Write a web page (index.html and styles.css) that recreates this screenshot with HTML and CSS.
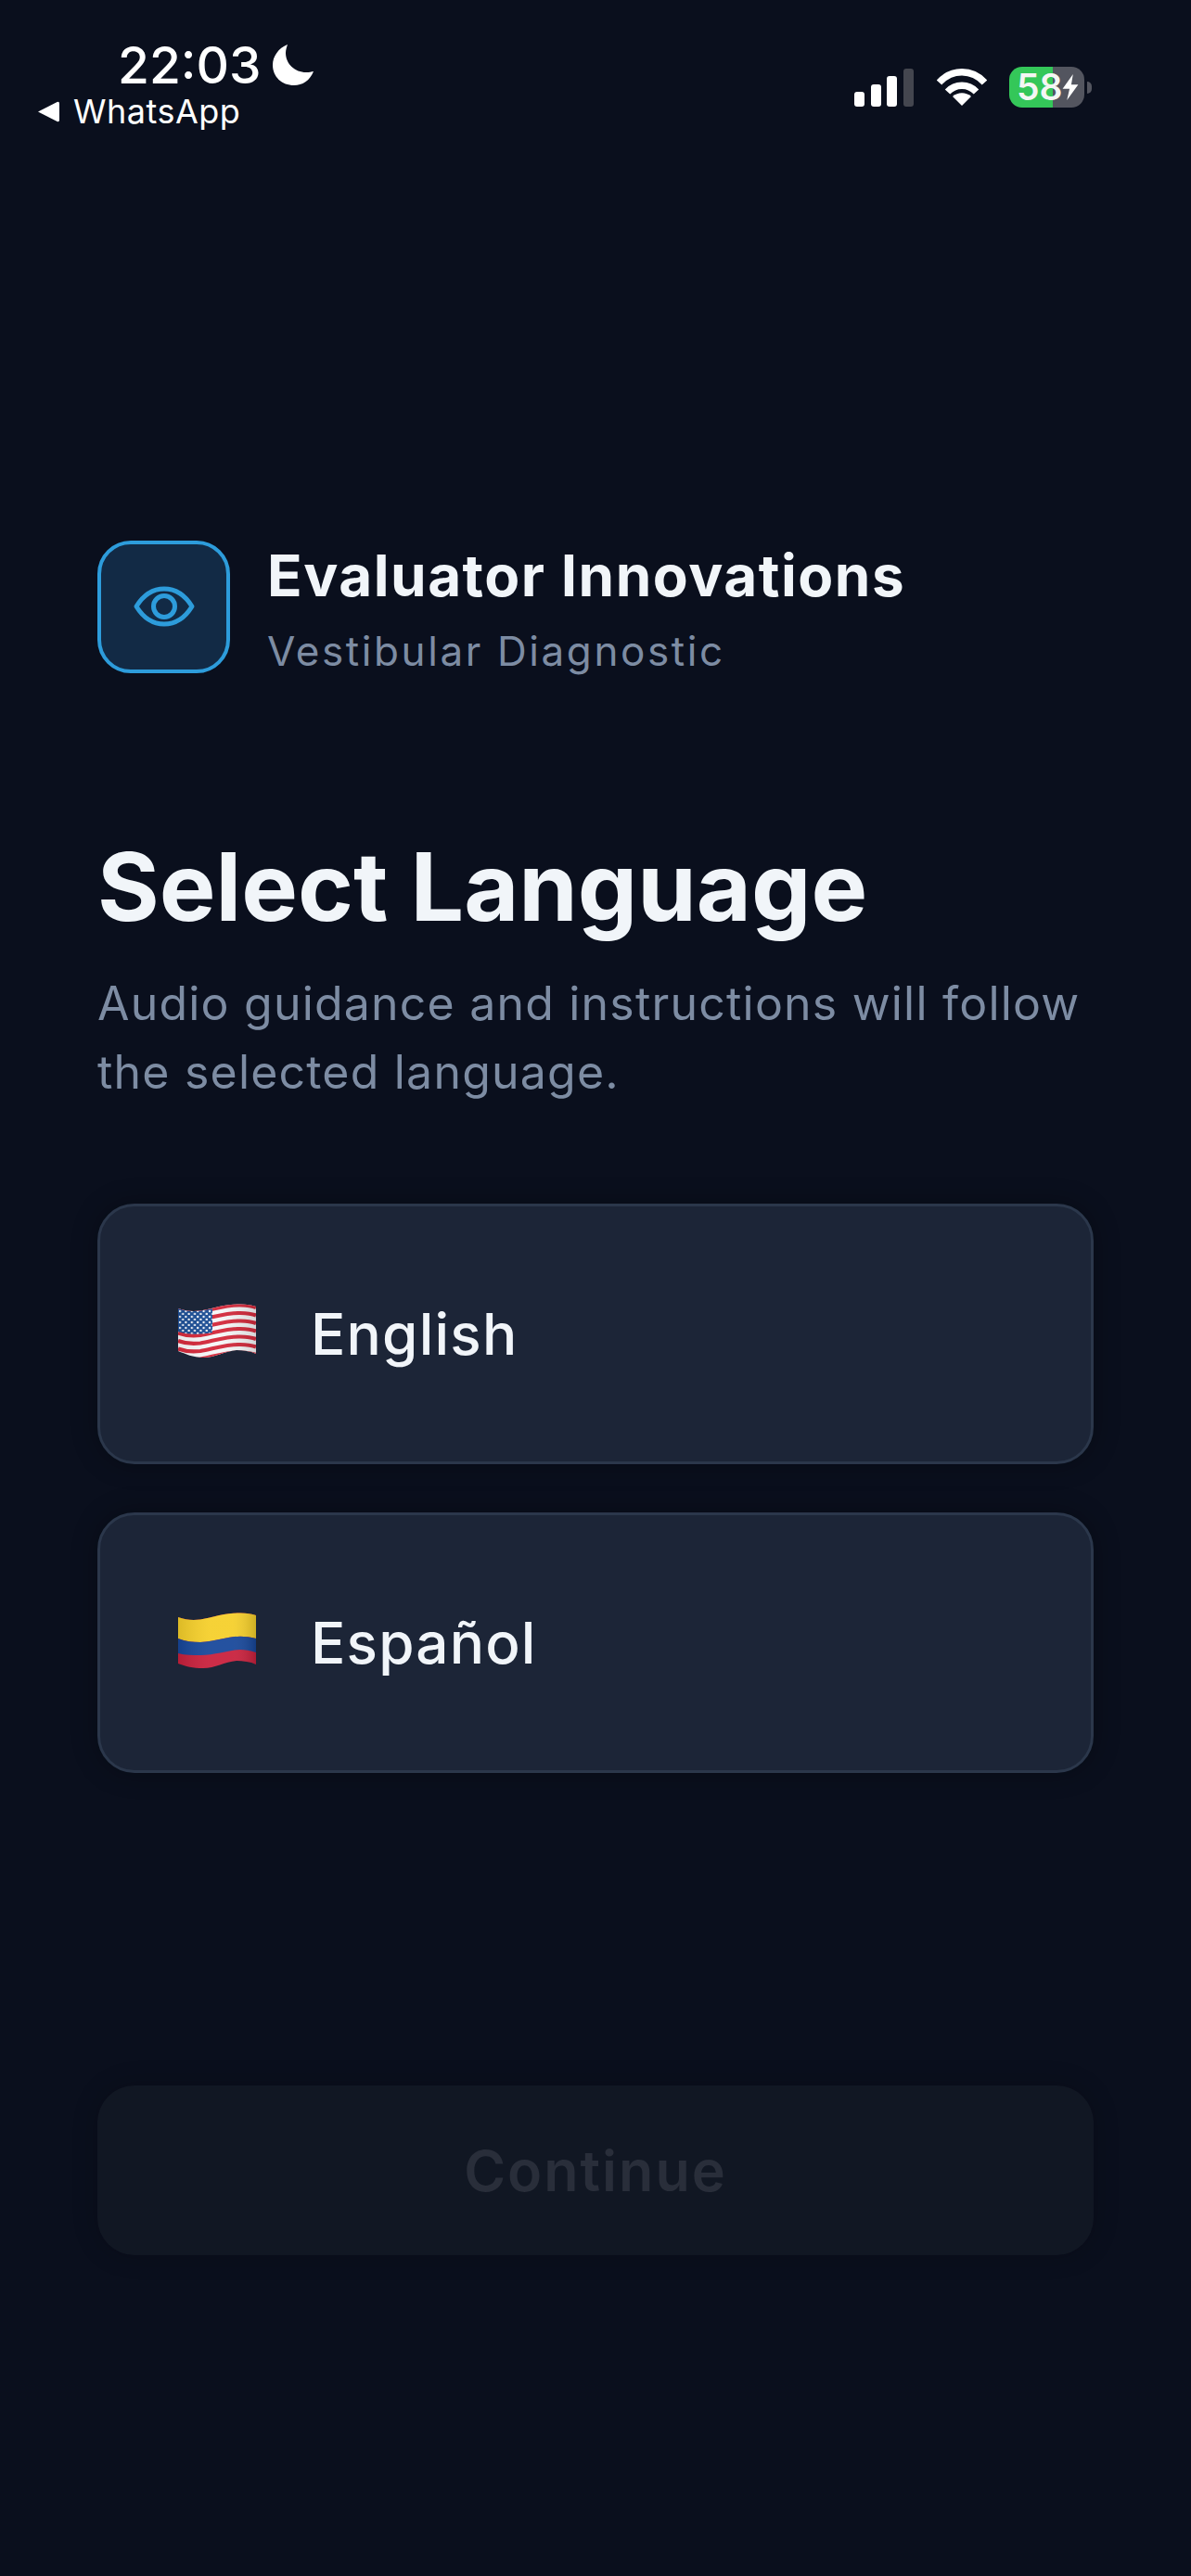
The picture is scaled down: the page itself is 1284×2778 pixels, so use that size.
FILE: index.html
```html
<!DOCTYPE html>
<html lang="en">
<head>
<meta charset="utf-8">
<title>Select Language</title>
<link rel="stylesheet" href="styles.css">
</head>
<body>
<div class="screen">
  <header class="status">
    <div class="status-left">
      <div class="time-row">
        <span class="time">22:03</span>
        <svg class="moon" viewBox="0 0 44 44"><path d="M16 0 C6 4 0 13 0 22 C0 35 10 44 23 44 C32 44 40 39 44 29 C42 29.500 39 30 36 30 C24 30 14 21 14 9 C14 6 15 3 16 0 Z" fill="#fff"/></svg>
      </div>
      <div class="back-row">
        <svg class="back" viewBox="0 0 24 24"><path d="M0 12 L21.500 1 Q24 0 24 3 L24 21 Q24 24 21.500 23 Z" fill="#fff"/></svg>
        <span class="back-label">WhatsApp</span>
      </div>
    </div>
    <div class="status-right">
      <div class="signal">
        <span class="bar b1"></span><span class="bar b2"></span><span class="bar b3"></span><span class="bar b4"></span>
      </div>
      <svg class="wifi" viewBox="0 0 54 40">
        <path d="M2.500 15 C16 0 38 0 51.500 15" fill="none" stroke="#fff" stroke-width="7.500"/>
        <path d="M11.500 25 C20 16 34 16 42.500 25" fill="none" stroke="#fff" stroke-width="7.500"/>
        <path d="M27 40 L17 30 C23 25 31 25 37 30 Z" fill="#fff"/>
      </svg>
      <div class="battery-wrap">
        <div class="battery">
          <span class="battery-pct">58</span>
          <svg class="bolt" viewBox="0 0 20 30"><path d="M13 0 L1 17 L9 17 L6 30 L19 12 L11 12 Z" fill="#fff"/></svg>
        </div>
        <span class="battery-cap"></span>
      </div>
    </div>
  </header>

  <main class="content">
    <section class="brand">
      <div class="logo">
        <svg class="eye" viewBox="0 0 66 44">
          <path d="M3 22 C11 9 22 3 33 3 C44 3 55 9 63 22 C55 35 44 41 33 41 C22 41 11 35 3 22 Z" fill="none" stroke="#2d9cdb" stroke-width="5" stroke-linejoin="round"/>
          <circle cx="33" cy="22" r="11.500" fill="none" stroke="#2d9cdb" stroke-width="5"/>
        </svg>
      </div>
      <div class="brand-text">
        <div class="brand-name">Evaluator Innovations</div>
        <div class="brand-sub">Vestibular Diagnostic</div>
      </div>
    </section>

    <h1 class="title">Select Language</h1>
    <p class="lead">Audio guidance and instructions will follow the selected language.</p>

    <div class="options">
      <div class="option">
        <svg class="flag" viewBox="0 0 84 60">
          <defs>
            <clipPath id="us-clip"><path d="M0 5 C8 8 16 8.500 24 7.500 C38 5 52 0 67 .5 C74 .7 80 1.500 84 3 L84 54 C78 51 70 50 63 50 C50 51 40 58 27 58 C16 58 8 54 0 51 Z"/></clipPath>
            <path id="wave" d="M0 0 C8 3 16 3.500 24 2.500 C38 0 52 -5 67 -4.500 C74 -4.300 80 -3.500 84 -2" fill="none" stroke="#d42a3c" stroke-width="4.200"/>
            <pattern id="stars" width="6.400" height="6" patternUnits="userSpaceOnUse"><circle cx="2" cy="2" r="1.200" fill="#f2f5fa"/><circle cx="5.200" cy="5" r="1.200" fill="#f2f5fa"/></pattern>
            <linearGradient id="us-shade" x1="0" x2="1" y1="0" y2="0">
              <stop offset="0" stop-color="#000" stop-opacity=".06"/>
              <stop offset=".5" stop-color="#fff" stop-opacity=".04"/>
              <stop offset="1" stop-color="#000" stop-opacity=".14"/>
            </linearGradient>
          </defs>
          <g clip-path="url(#us-clip)">
            <rect width="84" height="60" fill="#f6f7f8"/>
            <use href="#wave" y="6"/>
            <use href="#wave" y="14.500"/>
            <use href="#wave" y="23"/>
            <use href="#wave" y="31.500"/>
            <use href="#wave" y="40"/>
            <use href="#wave" y="48.500"/>
            <use href="#wave" y="57"/>
            <path d="M0 5 C8 8 16 8.500 24 7.500 L37 5.500 L37 31 C26 33 12 34 0 30 Z" fill="#1d4f96"/>
            <path d="M0 5 C8 8 16 8.500 24 7.500 L37 5.500 L37 31 C26 33 12 34 0 30 Z" fill="url(#stars)"/>
            <rect width="84" height="60" fill="url(#us-shade)"/>
          </g>
        </svg>
        <span class="option-label">English</span>
      </div>
      <div class="option">
        <svg class="flag" viewBox="0 0 84 60">
          <defs>
            <clipPath id="co-clip"><path d="M0 5 C8 8 16 8.500 24 7.500 C38 5 52 0 67 .5 C74 .7 80 1.500 84 3 L84 56 C78 53 70 52 63 52 C50 53 40 60 27 60 C16 60 8 58 0 55 Z"/></clipPath>
            <linearGradient id="co-shade" x1="0" x2="1" y1="0" y2="0">
              <stop offset="0" stop-color="#000" stop-opacity=".1"/>
              <stop offset=".4" stop-color="#fff" stop-opacity=".06"/>
              <stop offset=".7" stop-color="#fff" stop-opacity=".06"/>
              <stop offset="1" stop-color="#000" stop-opacity=".16"/>
            </linearGradient>
          </defs>
          <g clip-path="url(#co-clip)">
            <rect width="84" height="60" fill="#c9203c"/>
            <path d="M0 0 H84 V28 C78 26.500 72 25.700 67 25.700 C52 26 40 31 24 32 C16 32 8 31 0 28 Z" fill="#f5cf2a"/>
            <path d="M0 28 C8 31 16 32 24 32 C40 31 52 26 67 25.700 C72 25.700 78 26.500 84 28 V43 C78 41 72 40 67 40 C52 41 40 46 24 46 C16 46 8 46 0 44 Z" fill="#17479a"/>
            <rect width="84" height="60" fill="url(#co-shade)"/>
          </g>
        </svg>
        <span class="option-label">Español</span>
      </div>
    </div>

    <button class="continue" disabled>Continue</button>
  </main>
</div>
</body>
</html>
```
FILE: styles.css
```css
* { box-sizing: border-box; }
html, body { margin: 0; padding: 0; }
body {
  width: 1284px;
  height: 2778px;
  background: #0a0f1d;
  font-family: Inter, "Liberation Sans", sans-serif;
  overflow: hidden;
}
.screen { display: flex; flex-direction: column; height: 2778px; }

.status {
  display: flex;
  justify-content: space-between;
  align-items: flex-start;
  height: 581px;
  padding: 40px 107px 0 40px;
  color: #fff;
}
.status-left { display: flex; flex-direction: column; }
.time-row { display: flex; align-items: center; gap: 13px; padding-left: 87px; height: 60px; }
.time { font-size: 55px; font-weight: 500; line-height: 60px; }
.moon { width: 44px; height: 44px; }
.back-row { display: flex; align-items: center; gap: 14px; height: 40px; }
.back { width: 25px; height: 23px; }
.back-label { font-size: 36px; font-weight: 400; line-height: 40px; letter-spacing: .5px; }

.status-right { display: flex; align-items: center; gap: 24.500px; margin-top: 32px; }
.signal { display: flex; align-items: flex-end; gap: 6.600px; height: 41px; }
.bar { width: 11px; border-radius: 3px; background: #fff; }
.b1 { height: 16px; }
.b2 { height: 24px; }
.b3 { height: 33px; }
.b4 { height: 41px; background: #44464f; }
.wifi { width: 54px; height: 40px; }
.battery-wrap { display: flex; align-items: center; gap: 3px; }
.battery {
  display: flex;
  align-items: center;
  width: 81px;
  height: 44px;
  padding-left: 8px;
  border-radius: 14px;
  background: linear-gradient(90deg, #34c759 0 47px, #53555f 47px);
}
.battery-pct { font-size: 39px; font-weight: 600; line-height: 44px; color: #f4f6f4; }
.bolt { width: 20px; height: 28px; margin-left: -2px; }
.battery-cap {
  width: 5px;
  height: 13px;
  background: #53555f;
  border-radius: 0 6px 6px 0;
}

.content { display: flex; flex-direction: column; padding: 0 105px; }
.brand { display: flex; align-items: center; gap: 40px; }
.logo {
  display: flex;
  align-items: center;
  justify-content: center;
  width: 143px;
  height: 143px;
  border: 4.500px solid #2d9cdb;
  border-radius: 36px;
  background: #122a45;
}
.eye { width: 66px; height: 44px; }
.brand-text { display: flex; flex-direction: column; gap: 20px; margin-top: 4px; }
.brand-name { font-size: 62px; font-weight: 650; line-height: 72px; color: #f1f5f9; letter-spacing: 1.500px; }
.brand-sub { font-size: 44px; font-weight: 400; line-height: 50px; color: #7d8ca3; letter-spacing: 2.600px; }

.title { margin: 0; padding-top: 169px; font-size: 102px; font-weight: 700; line-height: 120px; color: #f1f5f9; }
.lead { margin: 0; padding-top: 29px; font-size: 50px; font-weight: 400; line-height: 74px; color: #7d8ca3; letter-spacing: 1.200px; }

.options { display: flex; flex-direction: column; gap: 52px; margin-top: 105px; }
.option {
  display: flex;
  align-items: center;
  gap: 59px;
  height: 281px;
  padding-left: 84px;
  border: 3px solid #2b374b;
  border-radius: 40px;
  background: #1c2537;
  box-shadow: 0 0 28px rgba(0, 0, 0, .3);
}
.flag { width: 84px; height: 60px; margin-bottom: 6px; filter: blur(.4px); }
.option-label { font-size: 62px; font-weight: 500; color: #f1f5f9; letter-spacing: 1.200px; }

.continue {
  display: flex;
  align-items: center;
  justify-content: center;
  width: 1074px;
  height: 183px;
  margin-top: 337px;
  border: 0;
  border-radius: 40px;
  background: #111723;
  box-shadow: 0 0 28px rgba(0, 0, 0, .2);
  font-family: inherit;
  font-size: 61px;
  font-weight: 600;
  color: #292e3a;
  letter-spacing: 2px;
}
```
